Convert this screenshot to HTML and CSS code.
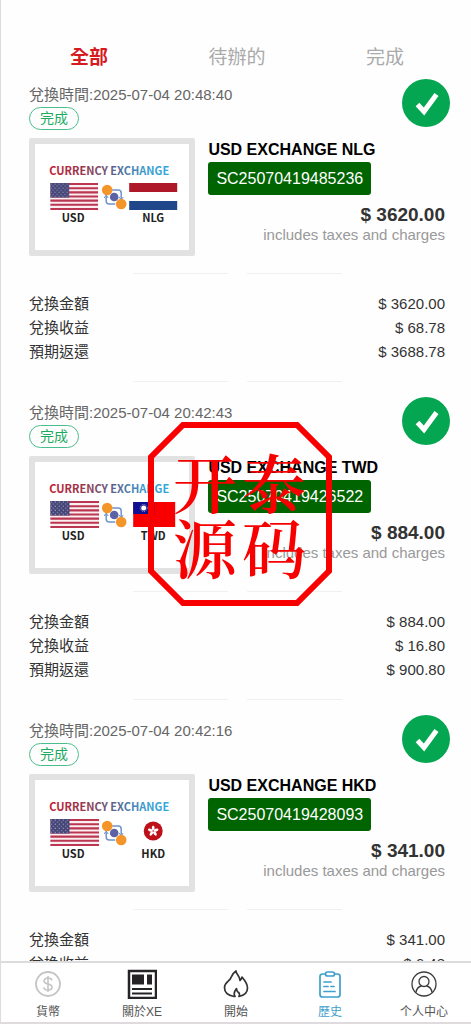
FILE: index.html
```html
<!DOCTYPE html>
<html lang="zh-Hant">
<head>
	<meta charset="utf-8">
	<meta name="viewport" content="width=device-width, initial-scale=1.0">
	<title>歷史</title>
	<link rel="stylesheet" href="styles.css">
</head>
<body>
	<!-- shared symbols -->
	<svg class="defs" width="0" height="0" aria-hidden="true">
		<defs>
			<linearGradient id="title-fill" x1="0" x2="1" y1="0" y2="0">
				<stop offset="0" stop-color="#c01f36"/>
				<stop offset="0.3" stop-color="#943a50"/>
				<stop offset="0.55" stop-color="#5b6490"/>
				<stop offset="0.8" stop-color="#3d9bd0"/>
				<stop offset="1" stop-color="#35a8dc"/>
			</linearGradient>
			<pattern id="stars" width="4" height="4" patternUnits="userSpaceOnUse">
				<rect width="4" height="4" fill="#454677"/>
				<circle cx="1" cy="1" r="0.6" fill="#a5a6c6"/>
				<circle cx="3" cy="3" r="0.6" fill="#a5a6c6"/>
			</pattern>
			<symbol id="us" viewBox="0 0 48 26" preserveAspectRatio="none">
				<rect width="48" height="26" fill="#fbeef0"/>
				<path d="M0 1h48M0 5h48M0 9h48M0 13h48M0 17h48M0 21h48M0 25h48" stroke="#bb3650" stroke-width="2"/>
				<rect width="19" height="14" fill="url(#stars)"/>
			</symbol>
			<symbol id="swap" viewBox="0 0 26 26">
				<path d="M11 6h6q3 0 3 3v7M5 12v5q0 3 3 3h6" fill="none" stroke="#6f93cc" stroke-width="1.5"/>
				<path d="M3 14l2-3 2 3M18 13l2 3 2-3" fill="none" stroke="#6f93cc"/>
				<circle cx="6" cy="6" r="5.3" fill="#f4952a"/>
				<circle cx="13" cy="13" r="4.3" fill="#5d62a5"/>
				<circle cx="20" cy="20" r="5.3" fill="#f4952a"/>
			</symbol>
			<symbol id="check" viewBox="0 0 48 48">
				<circle cx="24" cy="24" r="24" fill="#05a651"/>
				<path d="M15.500 25.500l6.500 7L34.500 15.500" fill="none" stroke="#fff" stroke-width="5"/>
			</symbol>
		</defs>
	</svg>

	<nav class="tabs">
		<a class="active" href="#all">全部</a>
		<a href="#pending">待辦的</a>
		<a href="#done">完成</a>
	</nav>

	<main class="records">
		<article class="record">
			<header>
				<div>
					<p class="time">兌換時間:2025-07-04 20:48:40</p>
					<span class="badge">完成</span>
				</div>
				<svg class="check" role="img" aria-label="完成"><use href="#check"/></svg>
			</header>
			<div class="product">
				<svg class="thumb" viewBox="0 0 154 106">
					<text class="thumb-title" x="14" y="31" fill="url(#title-fill)">CURRENCY EXCHANGE</text>
					<use href="#us" x="15" y="39" width="48" height="27"/>
					<use href="#swap" x="66" y="40" width="26" height="26"/>
					<rect x="94" y="39" width="48" height="9" fill="#ae1828"/>
					<rect x="94" y="57" width="48" height="9" fill="#20478a"/>
					<text class="thumb-code" x="38" y="78">USD</text>
					<text class="thumb-code" x="118" y="78">NLG</text>
				</svg>
				<div class="info">
					<h2>USD EXCHANGE NLG</h2>
					<span class="serial">SC25070419485236</span>
					<p class="amount">$ 3620.00</p>
					<p class="note">includes taxes and charges</p>
				</div>
			</div>
			<div class="divider"><i></i><i></i></div>
			<dl>
				<div><dt>兌換金額</dt><dd>$ 3620.00</dd></div>
				<div><dt>兌換收益</dt><dd>$ 68.78</dd></div>
				<div><dt>預期返還</dt><dd>$ 3688.78</dd></div>
			</dl>
			<div class="divider"><i></i><i></i></div>
		</article>

		<article class="record">
			<header>
				<div>
					<p class="time">兌換時間:2025-07-04 20:42:43</p>
					<span class="badge">完成</span>
				</div>
				<svg class="check" role="img" aria-label="完成"><use href="#check"/></svg>
			</header>
			<div class="product">
				<svg class="thumb" viewBox="0 0 154 106">
					<text class="thumb-title" x="14" y="31" fill="url(#title-fill)">CURRENCY EXCHANGE</text>
					<use href="#us" x="15" y="39" width="49" height="27"/>
					<use href="#swap" x="66" y="40" width="26" height="26"/>
					<rect x="98" y="40" width="42" height="25" fill="#f80000"/>
					<rect x="98" y="40" width="21" height="12" fill="#100f94"/>
					<circle cx="108.500" cy="46" r="3.500" fill="none" stroke="#aab" stroke-dasharray="1 1"/>
					<circle cx="108.500" cy="46" r="2.500" fill="#fff"/>
					<text class="thumb-code" x="38" y="78">USD</text>
					<text class="thumb-code" x="118" y="78">TWD</text>
				</svg>
				<div class="info">
					<h2>USD EXCHANGE TWD</h2>
					<span class="serial">SC25070419426522</span>
					<p class="amount">$ 884.00</p>
					<p class="note">includes taxes and charges</p>
				</div>
			</div>
			<div class="divider"><i></i><i></i></div>
			<dl>
				<div><dt>兌換金額</dt><dd>$ 884.00</dd></div>
				<div><dt>兌換收益</dt><dd>$ 16.80</dd></div>
				<div><dt>預期返還</dt><dd>$ 900.80</dd></div>
			</dl>
			<div class="divider"><i></i><i></i></div>
		</article>

		<article class="record">
			<header>
				<div>
					<p class="time">兌換時間:2025-07-04 20:42:16</p>
					<span class="badge">完成</span>
				</div>
				<svg class="check" role="img" aria-label="完成"><use href="#check"/></svg>
			</header>
			<div class="product">
				<svg class="thumb" viewBox="0 0 154 106">
					<text class="thumb-title" x="14" y="31" fill="url(#title-fill)">CURRENCY EXCHANGE</text>
					<use href="#us" x="15" y="39" width="49" height="27"/>
					<use href="#swap" x="66" y="40" width="26" height="26"/>
					<circle cx="118" cy="51" r="9.500" fill="#bd1018"/>
					<g fill="#fff">
						<ellipse id="petal" cx="118" cy="48" rx="1.400" ry="2.500"/>
						<use href="#petal" transform="rotate(72 118 51)"/>
						<use href="#petal" transform="rotate(144 118 51)"/>
						<use href="#petal" transform="rotate(216 118 51)"/>
						<use href="#petal" transform="rotate(288 118 51)"/>
					</g>
					<text class="thumb-code" x="38" y="78">USD</text>
					<text class="thumb-code" x="118" y="78">HKD</text>
				</svg>
				<div class="info">
					<h2>USD EXCHANGE HKD</h2>
					<span class="serial">SC25070419428093</span>
					<p class="amount">$ 341.00</p>
					<p class="note">includes taxes and charges</p>
				</div>
			</div>
			<div class="divider"><i></i><i></i></div>
			<dl>
				<div><dt>兌換金額</dt><dd>$ 341.00</dd></div>
				<div><dt>兌換收益</dt><dd>$ 6.48</dd></div>
			</dl>
		</article>
	</main>

	<nav class="bottom">
		<a href="#currency">
			<svg viewBox="0 0 30 30" fill="none" stroke="#c6c4c6">
				<circle cx="15" cy="15" r="12" stroke-width="1.800"/>
				<path d="M19 11.500q-.5-2.500-4-2.500t-4 2.800q0 2.500 4 3.200t4 3.300q0 2.700-4 2.700t-4.200-2.800M15 7v16" stroke-width="1.600"/>
			</svg>
			貨幣
		</a>
		<a href="#about">
			<svg viewBox="0 0 30 30" fill="none" stroke="#252326">
				<rect x="2" y="2" width="27" height="27" stroke-width="2.500"/>
				<path d="M5 20h20M5 24.500h20" stroke-width="2"/>
				<path d="M5 5.500h12v10H5zM20 5.500h5v10h-5z" fill="#252326" stroke="none"/>
			</svg>
			關於XE
		</a>
		<a href="#start">
			<svg viewBox="0 0 30 30" fill="none" stroke="#333" stroke-width="1.700" stroke-linejoin="round">
				<path d="M13 27.500C7 26.500 3.500 23 3.500 18.500c0-5 5.500-6.500 6.500-10 .6-2 2-4.500 5-6.500 0 3.500 4 5 4 9.500 1.500-1 2-2 2-3.500 3 3.500 5.500 7 5.500 11 0 4.500-3.500 7.500-8.500 8.500 1-1.500 .5-3.500-1-4.500-1-.7-1.500-2-1.500-3.500-1.500 2-3.500 5-1.500 8z"/>
			</svg>
			開始
		</a>
		<a class="active" href="#history">
			<svg viewBox="0 0 30 30" fill="none" stroke="#3f9fcd" stroke-width="1.700" stroke-linecap="round">
				<path d="M10 5H7.500Q5 5 5 7.500v18Q5 28 7.500 28h15q2.500 0 2.500-2.500v-18Q25 5 22.500 5H20"/>
				<rect x="10.500" y="3" width="9" height="4" rx="2"/>
				<path d="M9 13h7M9 17.500h4M16 17.500h3M9 22.500h11"/>
			</svg>
			歷史
		</a>
		<a href="#me">
			<svg viewBox="0 0 30 30" fill="none" stroke="#3c3c3c" stroke-width="1.300">
				<circle cx="15" cy="15" r="12"/>
				<circle cx="15" cy="12.500" r="5"/>
				<path d="M7 23.500c.5-4 3-6 5.500-6.500M23 23.500c-.5-4-3-6-5.500-6.500"/>
			</svg>
			个人中心
		</a>
	</nav>

	<!-- seal over the list -->
	<div class="seal" lang="zh-Hans">
		<svg viewBox="0 0 184 184" fill="none" stroke="#f80000" stroke-width="6">
			<path d="M35 3h114l32 32v114l-32 32H35L3 149V35z"/>
		</svg>
		<span>开</span><span>泰</span><span>源</span><span>码</span>
	</div>
</body>
</html>
```
FILE: styles.css
```css
* { box-sizing: border-box }
body {
	display: flex;
	flex-direction: column;
	height: 100vh;
	margin: 0;
	border-left: 1px solid #dcdcdc;
	background: #fefefe;
	color: #333;
	font: 15px/24px "Liberation Sans", "Noto Sans CJK TC", sans-serif;
}
h2, p, dl, dd { margin: 0 }
a { text-decoration: none }
.defs { position: absolute }

.tabs { display: flex; padding: 44px 12px 7px 14px }
.tabs a { flex: 1; color: #aaa; font-size: 19px; line-height: 28px; text-align: center }
.tabs .active { color: #d71920; font-weight: bold }

.records { flex: 1; min-height: 0; overflow-y: auto; padding: 0 26px 0 28px; scrollbar-width: none }
.record header { display: flex; justify-content: space-between; height: 59px; margin-right: -5px }
.time { padding-top: 4px; color: #666 }
.badge {
	display: block;
	width: 50px;
	border: 1px solid #4bbd8b;
	border-radius: 12px;
	color: #1eaa60;
	font-size: 14px;
	line-height: 21px;
	text-align: center;
}
.check { width: 48px; height: 48px }

.product { display: flex; gap: 13px; height: 118px }
.thumb { flex: 0 0 40%; height: 118px; border: 6px solid #e2e2e2; border-radius: 2px; background: #fff }
.thumb-title, .thumb-code { font-family: "Noto Sans CJK TC", sans-serif; font-weight: bold; font-size: 11px }
.thumb-code { fill: #222; text-anchor: middle }
.info { flex: 1 }
.info h2 { color: #000; font-size: 16px; line-height: 24px }
.serial {
	display: inline-block;
	padding: 0 8px;
	border-radius: 3px;
	background: #006400;
	color: #fff;
	font-size: 16px;
	line-height: 33px;
	vertical-align: top;
}
.amount { padding-top: 8px; font-size: 19px; font-weight: bold; text-align: right }
.note { color: #999; line-height: 16px; text-align: right }

.divider { display: flex; justify-content: center; gap: 19px; padding-top: 17px }
.divider i { width: 95px; height: 1px; background: #f3efef }
dl { padding: 18px 0 17px }
dl div { display: flex; justify-content: space-between }
dl + .divider { padding: 0 0 15px }

.bottom { display: flex; border-top: 2px solid #dcdcdc; border-bottom: 2px solid #dedadd; background: #fff }
.bottom a { flex: 1; padding-top: 6px; color: #555; font-size: 12px; line-height: 20px; text-align: center }
.bottom svg { display: block; width: 30px; height: 30px; margin: 0 auto 3px }
.bottom .active { color: #3f9fcd }

.seal {
	position: absolute;
	top: 422px;
	left: 148px;
	display: grid;
	grid-template-columns: 64px 64px;
	gap: 0 5px;
	padding: 26px 25px;
	color: #f80000;
	font: 600 64px/65px "Noto Serif CJK SC", "Noto Sans CJK SC", serif;
	pointer-events: none;
}
.seal svg { position: absolute; top: 0; left: 0; width: 184px; height: 184px }
```
